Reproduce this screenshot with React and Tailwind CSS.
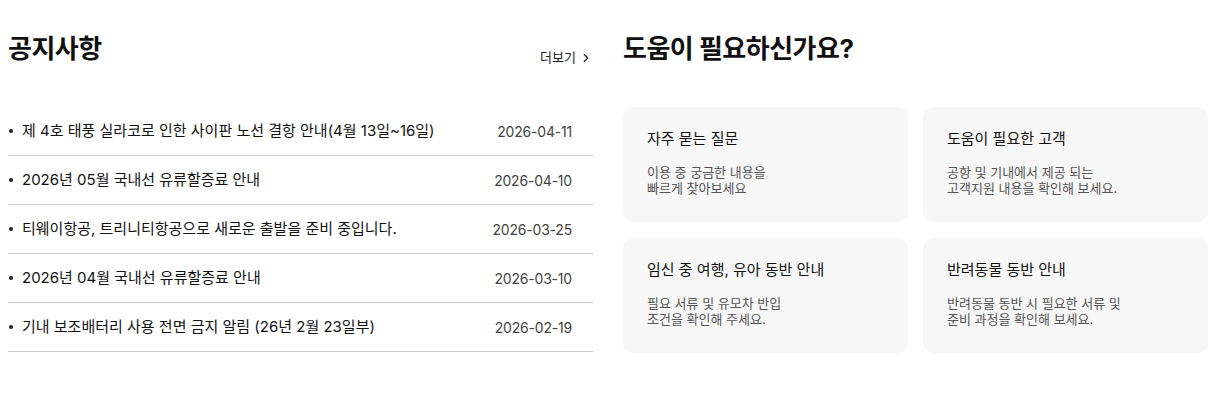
import { ChevronRight } from "lucide-react";

const notices = [
  { title: "제 4호 태풍 실라코로 인한 사이판 노선 결항 안내(4월 13일~16일)", date: "2026-04-11" },
  { title: "2026년 05월 국내선 유류할증료 안내", date: "2026-04-10" },
  { title: "티웨이항공, 트리니티항공으로 새로운 출발을 준비 중입니다.", date: "2026-03-25" },
  { title: "2026년 04월 국내선 유류할증료 안내", date: "2026-03-10" },
  { title: "기내 보조배터리 사용 전면 금지 알림 (26년 2월 23일부)", date: "2026-02-19" },
];

const helps = [
  { title: "자주 묻는 질문", lines: ["이용 중 궁금한 내용을", "빠르게 찾아보세요"] },
  { title: "도움이 필요한 고객", lines: ["공항 및 기내에서 제공 되는", "고객지원 내용을 확인해 보세요."] },
  { title: "임신 중 여행, 유아 동반 안내", lines: ["필요 서류 및 유모차 반입", "조건을 확인해 주세요."] },
  { title: "반려동물 동반 안내", lines: ["반려동물 동반 시 필요한 서류 및", "준비 과정을 확인해 보세요."] },
];

export default function App() {
  return (
    <div className="w-[1217px] h-[417px] bg-white font-['Inter','Noto_Sans_CJK_KR',sans-serif] text-[#111]">
      <div className="flex gap-[30px] pl-2 pt-[31px]">
        {/* 공지사항 */}
        <section className="w-[585px]">
          <div className="flex items-start justify-between h-[76px]">
            <h2 className="text-[26px] font-bold leading-[36px] tracking-[-0.5px]">공지사항</h2>
            <a className="flex items-center gap-[3px] text-[13px] text-[#222] mt-[17px] mr-0">
              더보기
              <ChevronRight className="w-[14px] h-[14px]" strokeWidth={2} />
            </a>
          </div>
          <ul>
            {notices.map((n, i) => (
              <li key={i} className="flex items-center justify-between h-[49px] border-b border-[#cccccc] pr-[21px]">
                <span className="flex items-center text-[15px] text-[#111]">
                  <span className="w-[4px] h-[4px] rounded-full bg-[#222] ml-[1px] mr-[9px]" />
                  {n.title}
                </span>
                <span className="text-[14px] text-[#444] tracking-[-0.2px]">{n.date}</span>
              </li>
            ))}
          </ul>
        </section>

        {/* 도움이 필요하신가요? */}
        <section className="w-[585px]">
          <h2 className="text-[26px] font-bold leading-[36px] tracking-[-0.5px] h-[76px]">도움이 필요하신가요?</h2>
          <div className="grid grid-cols-2 gap-x-[15px] gap-y-[16px]">
            {helps.map((h, i) => (
              <div key={i} className="h-[115px] rounded-[10px] bg-[#f7f7f7] px-6 pt-[21px]">
                <p className="text-[15px] text-[#111] leading-[22px]">{h.title}</p>
                <p className="mt-[14px] text-[13px] text-[#555] leading-[16px]">
                  {h.lines[0]}
                  <br />
                  {h.lines[1]}
                </p>
              </div>
            ))}
          </div>
        </section>
      </div>
    </div>
  );
}
